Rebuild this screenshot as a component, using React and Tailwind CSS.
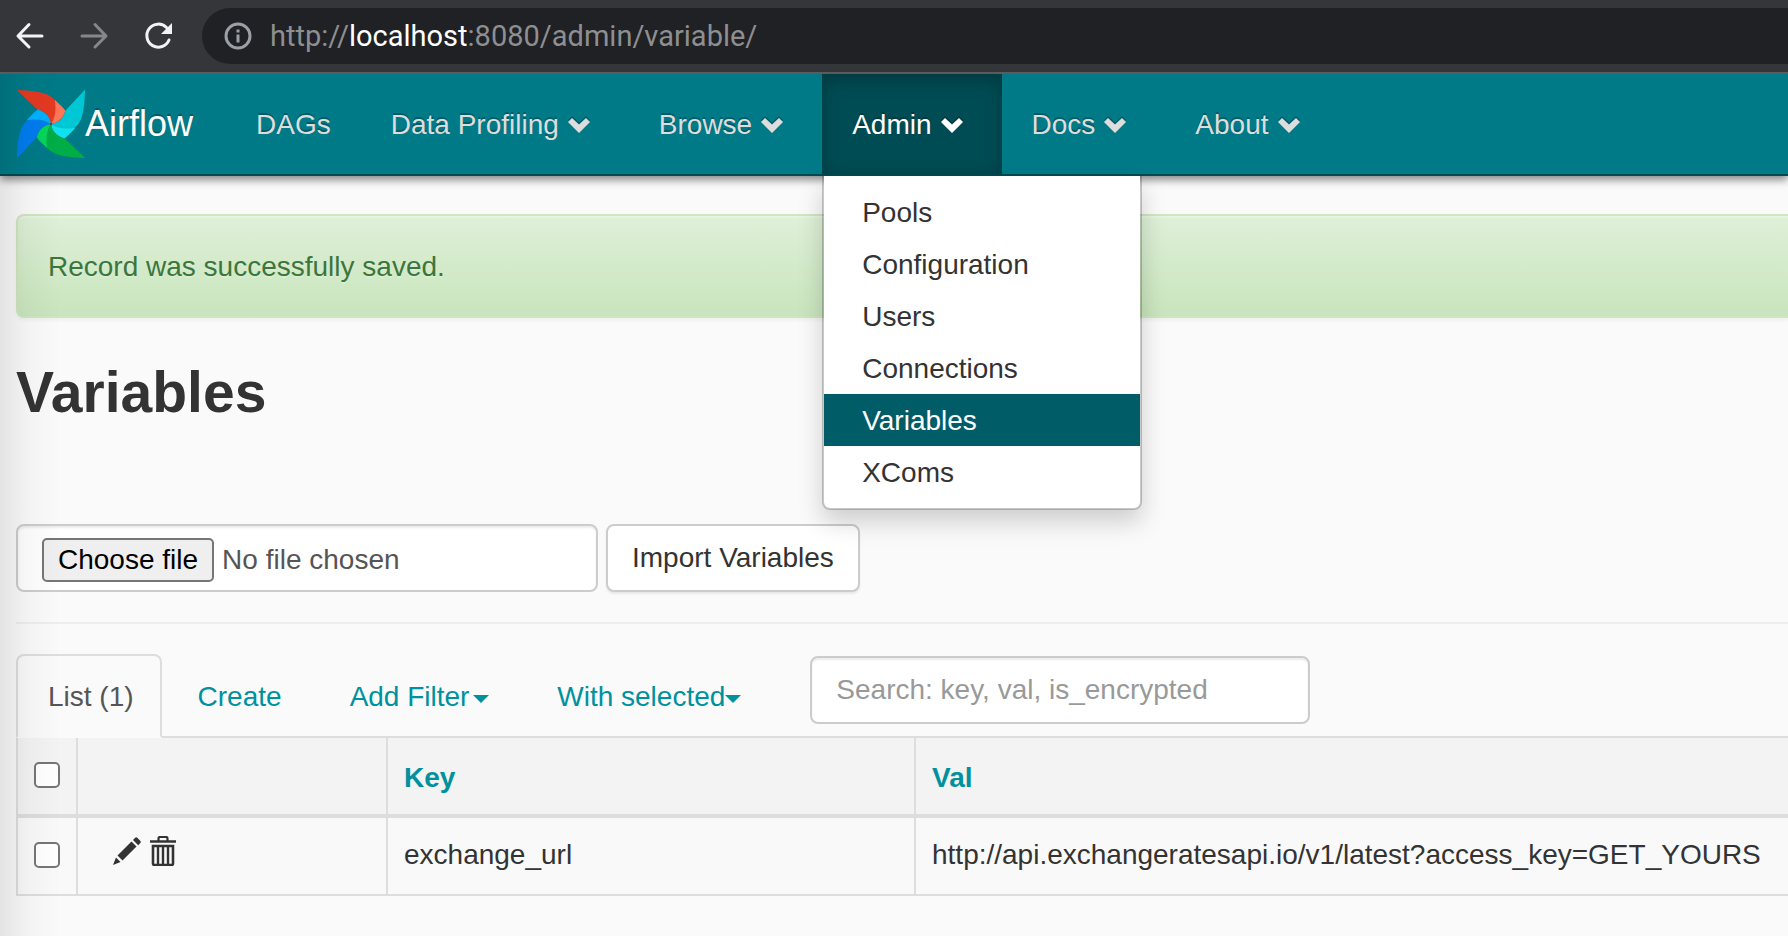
import React from "react";

const navItems = [
  { label: "DAGs", menu: false },
  { label: "Data Profiling", menu: true },
  { label: "Browse", menu: true },
  { label: "Admin", menu: true, active: true },
  { label: "Docs", menu: true },
  { label: "About", menu: true },
];

const adminMenu = ["Pools", "Configuration", "Users", "Connections", "Variables", "XComs"];

const blades = [
  { angle: 0, main: "#e43921", tip: "#ff7557" },
  { angle: 90, main: "#00c7d4", tip: "#11e1ee" },
  { angle: 180, main: "#00ad46", tip: "#04d659" },
  { angle: 270, main: "#017cee", tip: "#00b1ff" },
];

function Pinwheel() {
  return (
    <svg className="size-[68px] shrink-0" viewBox="51 33 204 204" aria-hidden="true">
      {blades.map((b) => (
        <g key={b.angle} transform={`rotate(${b.angle} 153 135)`}>
          <path
            fill={b.main}
            d="M51 34Q51 33 53 33C92 34 128 38 148 50C155 54 160 59 166 65C170 92 168 114 153 135C150 114 138 98 113 92Z"
          />
          <path fill={b.tip} d="M164 62C176 73 186 82 194 92Q198 96 195 99C188 119 174 132 153 135C167 113 169 90 164 62Z" />
        </g>
      ))}
      <circle cx="153" cy="135" r="4" fill="#51504f" />
    </svg>
  );
}

function Chevron() {
  return (
    <svg className="h-4 w-6 drop-shadow-[0_-2px_0_rgba(0,0,0,0.25)]" viewBox="0 0 24 16" aria-hidden="true">
      <path d="M1 5L5 1L12 7.5L19 1L23 5L12 16Z" fill="currentColor" />
    </svg>
  );
}

function BrowserBar() {
  return (
    <div className="flex h-[74px] items-center border-b-2 border-[#5f6062] bg-[#35363a] pl-3">
      <button type="button" aria-label="Back" className="text-[#f1f3f4]">
        <svg className="size-9" viewBox="0 0 36 36" fill="none" stroke="currentColor" strokeWidth="3" strokeLinecap="round" strokeLinejoin="round">
          <path d="M30 18H7M17 6.500L6 18L17 29" />
        </svg>
      </button>
      <button type="button" aria-label="Forward" className="ml-7 text-[#86878a]">
        <svg className="size-9" viewBox="0 0 36 36" fill="none" stroke="currentColor" strokeWidth="3" strokeLinecap="round" strokeLinejoin="round">
          <path d="M6 18H29M19 6.500L30 18L19 29" />
        </svg>
      </button>
      <button type="button" aria-label="Reload" className="ml-7 text-[#f1f3f4]">
        <svg className="size-9" viewBox="0 0 36 36" fill="none">
          <path d="M26.500 9.500A11.500 11.500 0 1 0 29 22" stroke="currentColor" strokeWidth="3" strokeLinecap="round" />
          <path d="M32 5V16H21Z" fill="currentColor" />
        </svg>
      </button>
      <div className="ml-[26px] flex h-14 flex-1 items-center rounded-l-full bg-[#202124] pl-[22px]">
        <svg className="size-7" viewBox="0 0 28 28" fill="none" aria-hidden="true">
          <circle cx="14" cy="14" r="12" stroke="#9aa0a6" strokeWidth="3" />
          <path d="M12.500 12.500h3v8h-3zM12.500 7.500h3v3h-3z" fill="#9aa0a6" />
        </svg>
        <p className="ml-[18px] font-[Roboto,sans-serif] text-[29px] leading-10 text-[#8e8f91]">
          http://<span className="text-white">localhost</span>:8080/admin/variable/
        </p>
      </div>
    </div>
  );
}

function NavBar() {
  return (
    <nav className="relative z-20 flex h-[102px] border-b-2 border-[#004a52] bg-[#007a87] shadow-[0_4px_8px_rgba(0,0,0,0.45)]">
      <a href="#home" className="flex items-center pr-[33px] pl-[17px] text-4xl text-white [text-shadow:0_-2px_0_rgba(0,0,0,0.25)]">
        <Pinwheel />
        Airflow
      </a>
      <ul className="flex">
        {navItems.map((item) => (
          <li key={item.label} className="relative">
            <a
              href={`#${item.label}`}
              className={
                "flex h-[100px] items-center gap-2 whitespace-nowrap pt-[2px] pl-[30px] [text-shadow:0_-2px_0_rgba(0,0,0,0.25)] " +
                (item.menu ? "pr-[38px] " : "pr-[30px] ") +
                (item.active
                  ? "bg-[#004c54] text-white shadow-[inset_0_6px_18px_rgba(0,0,0,0.25)]"
                  : "text-[#dddddd]")
              }
            >
              {item.label}
              {item.menu && <Chevron />}
            </a>
            {item.active && (
              <ul className="absolute top-[102px] left-0 w-80 rounded-b-lg border-2 border-t-0 border-black/20 bg-white bg-clip-padding py-[10px] text-[#333333] shadow-[0_12px_24px_rgba(0,0,0,0.175)]">
                {adminMenu.map((entry) => (
                  <li key={entry}>
                    <a
                      href={`#${entry}`}
                      className={
                        "block h-[52px] px-[38px] leading-[54px] " +
                        (entry === "Variables" ? "bg-[#005c66] text-white" : "")
                      }
                    >
                      {entry}
                    </a>
                  </li>
                ))}
              </ul>
            )}
          </li>
        ))}
      </ul>
    </nav>
  );
}

function Caret() {
  return <span className="inline-block border-x-8 border-t-8 border-x-transparent border-t-current align-middle" />;
}

function Tabs() {
  const link = "block border-2 border-b-0 border-transparent px-[30px] pt-[21px] pb-[19px] leading-10";
  return (
    <ul className="mt-[30px] flex items-start gap-1 whitespace-nowrap border-b-2 border-[#dddddd] text-[#00919e]">
      <li className="-mb-[2px]">
        <a href="#list" className="block rounded-t-lg border-2 border-[#dddddd] border-b-[#fafafa] bg-[#fafafa] pt-[21px] pr-[26px] pb-[19px] pl-[30px] leading-10 text-[#555555]">
          List (1)
        </a>
      </li>
      <li>
        <a href="#create" className={link}>Create</a>
      </li>
      <li>
        <a href="#filter" className={link}>
          Add Filter <span className="-ml-1"><Caret /></span>
        </a>
      </li>
      <li>
        <a href="#selected" className={link}>
          With selected<Caret />
        </a>
      </li>
      <li className="ml-[33px] pt-[2px]">
        <input
          type="text"
          aria-label="Search"
          placeholder="Search: key, val, is_encrypted"
          className="block h-[68px] w-[500px] rounded-lg border-2 border-[#cccccc] bg-white px-6 text-[#555555] shadow-[inset_0_2px_2px_rgba(0,0,0,0.075)] placeholder:text-[#999999]"
        />
      </li>
    </ul>
  );
}

function Check({ label }) {
  return (
    <input
      type="checkbox"
      aria-label={label}
      className="block size-[26px] appearance-none rounded-[5px] border-2 border-[#767676] bg-white"
    />
  );
}

function PencilIcon() {
  return (
    <svg className="size-[30px]" viewBox="0 0 30 30" fill="#333333" aria-hidden="true">
      <path d="M1 29L4 21.500L8.500 26Z" />
      <path d="M5.500 19.500L19.500 5.500L24.500 10.500L10.500 24.500Z" />
      <path d="M21 4L23.200 1.800Q24.200 .8 25.300 1.800L28.400 4.900Q29.300 6 28.400 7L26.200 9.200Z" />
    </svg>
  );
}

function TrashIcon() {
  return (
    <svg className="h-[30px] w-[26px]" viewBox="0 0 26 30" fill="none" stroke="#333333" aria-hidden="true">
      <path d="M0 5.500H26" strokeWidth="2.500" />
      <path d="M8.500 5V2.500Q8.500 1 10 1H16Q17.500 1 17.500 2.500V5" strokeWidth="2.200" />
      <path d="M3 10H23V27.500Q23 29 21.500 29H4.500Q3 29 3 27.500Z" strokeWidth="2.600" />
      <path d="M8 10V28M13 10V28M18 10V28" strokeWidth="2.400" />
    </svg>
  );
}

function VariablesTable() {
  const cell = "border-r-2 border-[#dddddd]";
  return (
    <table className="w-full table-fixed border-separate border-spacing-0 border-l-2 border-[#dddddd] text-left">
      <colgroup>
        <col className="w-[60px]" />
        <col className="w-[310px]" />
        <col className="w-[528px]" />
        <col />
      </colgroup>
      <thead>
        <tr className="h-20 bg-[#f3f3f3] text-[#00919e]">
          <th className={cell + " border-b-4 pb-[2px] pl-4"}><Check label="Select all records" /></th>
          <th className={cell + " border-b-4"} />
          <th className={cell + " border-b-4 pt-1 pl-4"}><a href="#key">Key</a></th>
          <th className="border-b-4 border-[#dddddd] pt-1 pl-4"><a href="#val">Val</a></th>
        </tr>
      </thead>
      <tbody>
        <tr className="h-[78px] bg-[#f9f9f9]">
          <td className={cell + " border-b-2 pb-[2px] pl-4"}><Check label="Select record" /></td>
          <td className={cell + " border-b-2 pb-[10px] pl-[34px]"}>
            <div className="flex gap-2">
              <button type="button" aria-label="Edit record"><PencilIcon /></button>
              <button type="button" aria-label="Delete record"><TrashIcon /></button>
            </div>
          </td>
          <td className={cell + " border-b-2 pb-[2px] pl-4"}>exchange_url</td>
          <td className="whitespace-nowrap border-b-2 border-[#dddddd] pb-[2px] pl-4">
            http://api.exchangeratesapi.io/v1/latest?access_key=GET_YOURS
          </td>
        </tr>
      </tbody>
    </table>
  );
}

export default function App() {
  return (
    <div className="min-h-screen overflow-x-hidden bg-[#fafafa] font-['Liberation_Sans',Arial,sans-serif] text-[28px] leading-10 text-[#333333]">
      <BrowserBar />
      <div className="relative">
        <NavBar />
        <main className="pt-[38px] pb-10 pl-4">
          <div
            role="status"
            className="rounded-l-lg border-2 border-r-0 border-[#d0e6be] bg-linear-to-b from-[#dff0d8] to-[#c8e5bc] px-[30px] pt-[31px] pb-[29px] text-[#3c763d] shadow-[inset_0_2px_0_rgba(255,255,255,0.25),0_2px_4px_rgba(0,0,0,0.05)] [text-shadow:0_2px_0_rgba(255,255,255,0.2)]"
          >
            Record was successfully saved.
          </div>
          <h1 className="mt-10 mb-[98px] text-[57px] leading-[68px] font-bold">Variables</h1>
          <form className="flex gap-2">
            <label className="flex h-[68px] w-[582px] items-center rounded-lg border-2 border-[#cccccc] bg-white pt-1 pl-6 text-[#555555] shadow-[inset_0_2px_2px_rgba(0,0,0,0.075)]">
              <input type="file" className="sr-only" />
              <span className="flex h-11 items-center rounded-[5px] border-2 border-[#767676] bg-[#efefef] px-[14px] text-black">
                Choose file
              </span>
              <span className="ml-2">No file chosen</span>
            </label>
            <button
              type="submit"
              className="h-[68px] rounded-lg border-2 border-[#cccccc] bg-white px-6 shadow-[0_2px_2px_rgba(0,0,0,0.075)]"
            >
              Import Variables
            </button>
          </form>
          <hr className="mt-[30px] border-t-2 border-[#eeeeee]" />
          <Tabs />
          <VariablesTable />
        </main>
        <div className="pointer-events-none absolute inset-y-0 left-0 z-30 w-[60px] bg-linear-to-r from-black/9 via-black/3 via-45% to-transparent" />
      </div>
    </div>
  );
}
